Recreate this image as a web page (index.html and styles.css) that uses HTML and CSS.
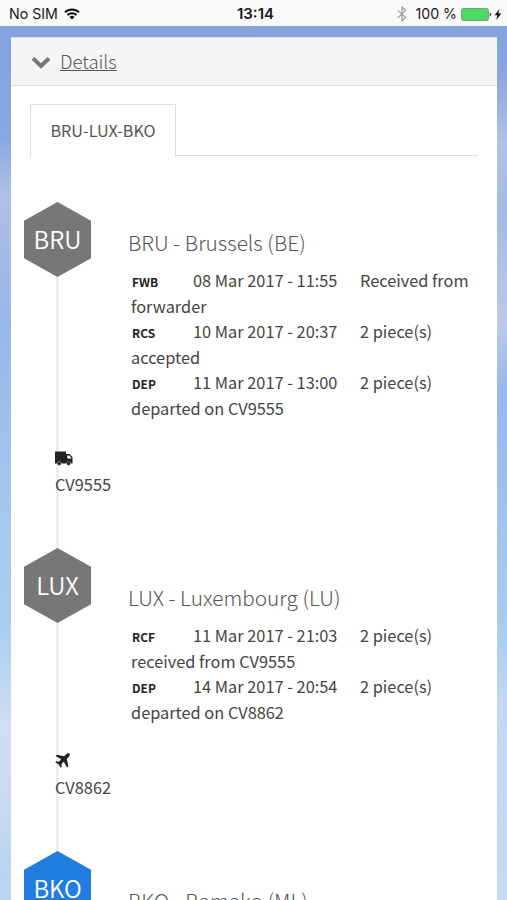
FILE: index.html
```html
<!DOCTYPE html>
<html lang="en">

<head>
    <meta charset="UTF-8">
    <meta name="viewport" content="width=device-width, initial-scale=1.0">
    <title>Shipment Details</title>
    <link rel="stylesheet" href="styles.css">
</head>

<body>

    <!-- Status bar -->
    <div class="status-bar">
        <div class="status-left">
            <span>No SIM</span>
            <svg class="wifi" viewBox="0 0 16 12">
                <path d="M1 4.4 A10 10 0 0 1 15 4.4" />
                <path d="M3.4 7 A6.6 6.6 0 0 1 12.6 7" />
                <path class="wifi-dot" d="M8 11.6 L5.4 8.9 A3.8 3.8 0 0 1 10.6 8.9 Z" />
            </svg>
        </div>
        <div class="status-time">13:14</div>
        <div class="status-right">
            <svg class="bluetooth" viewBox="0 0 10 16">
                <path d="M1 4.4 L8.6 11.4 L5 15 V1 L8.6 4.6 L1 11.6" />
            </svg>
            <span>100 %</span>
            <svg class="battery" viewBox="0 0 31 13">
                <rect x="0.5" y="0.5" width="27" height="12" rx="2" />
                <path d="M28.6 4.4 V8.6 Q30.4 8 30.4 6.5 Q30.4 5 28.6 4.4 Z" />
            </svg>
            <svg class="bolt" viewBox="0 0 8 11">
                <path d="M5.4 0 L0.6 6.2 H3.4 L2.2 11 L7.4 4.6 H4.4 Z" />
            </svg>
        </div>
    </div>

    <!-- Shipment panel -->
    <div class="page">
        <div class="panel">
            <div class="panel-header">
                <svg class="chevron" viewBox="0 0 20 13">
                    <path d="M2 2.4 L10 10 L18 2.4" />
                </svg>
                <a class="panel-title">Details</a>
            </div>

            <div class="tabs">
                <div class="tab">BRU-LUX-BKO</div>
                <div class="tab-rest"></div>
            </div>

            <div class="timeline">
                <div class="stop first">
                    <div class="track">
                        <div class="hexagon">BRU</div>
                        <div class="transit">
                            <svg class="truck" viewBox="0 0 18 15">
                                <path d="M0 0.5 H11 V3 H14.6 L17.5 6.2 V12.4 H16 A2.4 2.4 0 0 0 11.3 12.4 H6.6 A2.4 2.4 0 0 0 1.9 12.4 H0 Z" />
                                <path class="truck-window" d="M12.3 4.4 H14.2 L16.2 6.8 V7.4 H12.3 Z" />
                                <circle cx="4.2" cy="12.6" r="1.8" />
                                <circle cx="13.6" cy="12.6" r="1.8" />
                            </svg>
                            <span>CV9555</span>
                        </div>
                    </div>
                    <div class="info">
                        <h3>BRU - Brussels (BE)</h3>
                        <p><b>FWB</b><span class="date">08 Mar 2017 - 11:55</span>Received from forwarder</p>
                        <p><b>RCS</b><span class="date">10 Mar 2017 - 20:37</span>2 piece(s) accepted</p>
                        <p><b>DEP</b><span class="date">11 Mar 2017 - 13:00</span>2 piece(s) departed on CV9555</p>
                    </div>
                </div>

                <div class="stop">
                    <div class="track">
                        <div class="hexagon">LUX</div>
                        <div class="transit">
                            <svg class="plane" viewBox="0 0 16 16">
                                <path d="M15.6 0.4 C14.4 -0.1 12.8 0.4 11.6 1.6 L9.8 3.4 L2 1.8 L0.6 3.2 L6.6 6.6 L4.2 9.2 L1.5 8.8 L0.3 10 L3.9 12.1 L6 15.7 L7.2 14.5 L6.8 11.8 L9.4 9.4 L12.8 15.4 L14.2 14 L12.6 6.2 L14.4 4.4 C15.6 3.2 16.1 1.6 15.6 0.4 Z" />
                            </svg>
                            <span>CV8862</span>
                        </div>
                    </div>
                    <div class="info">
                        <h3>LUX - Luxembourg (LU)</h3>
                        <p><b>RCF</b><span class="date">11 Mar 2017 - 21:03</span>2 piece(s) received from CV9555</p>
                        <p><b>DEP</b><span class="date">14 Mar 2017 - 20:54</span>2 piece(s) departed on CV8862</p>
                    </div>
                </div>

                <div class="stop last">
                    <div class="track">
                        <div class="hexagon active">BKO</div>
                    </div>
                    <div class="info">
                        <h3>BKO - Bamako (ML)</h3>
                    </div>
                </div>
            </div>
        </div>
    </div>

</body>

</html>
```

FILE: styles.css
```css
* {
    margin: 0;
    padding: 0;
    box-sizing: border-box;
}

body {
    font-family: "Noto Sans CJK SC", sans-serif;
    font-size: 16.35px;
    color: #444;
    height: 900px;
    overflow: hidden;
    display: flex;
    flex-direction: column;
}

/* Status bar */
.status-bar {
    height: 26px;
    flex-shrink: 0;
    background-color: #f9f9f9;
    color: #1a1a1a;
    font-family: Inter, sans-serif;
    font-size: 14.2px;
    line-height: 26px;
    padding: 1px 5px 0 9px;
    display: grid;
    grid-template-columns: 1fr auto 1fr;
    align-items: center;
}

.status-left,
.status-right {
    display: flex;
    align-items: center;
}

.status-left {
    gap: 6px;
}

.status-right {
    justify-content: flex-end;
}

.status-time {
    font-size: 15px;
    font-weight: 600;
}

.wifi {
    width: 16px;
    height: 12px;
    fill: none;
    stroke: #111;
    stroke-width: 2;
}

.wifi .wifi-dot {
    fill: #111;
    stroke: none;
}

.bluetooth {
    width: 10px;
    height: 16px;
    margin-right: 8px;
    fill: none;
    stroke: #999;
    stroke-width: 1.2;
}

.battery {
    width: 31px;
    height: 13px;
    margin: 0 2px 0 4px;
    fill: #555;
}

.battery rect {
    fill: #4cd964;
    stroke: #7d9c82;
}

.bolt {
    width: 8px;
    height: 11px;
    fill: #111;
}

/* Page background */
.page {
    flex: 1;
    min-height: 0;
    padding: 11px 10px 0 11px;
    background:
        linear-gradient(#84a3dd 0, #88a4dc 40px, #b0c2e5 118px, #a5bbe3 185px, #bccae7 297px, #98b8ea 364px, #a1c5ec 500px, #abcfee 616px, #c2d8f0 672px, #c6daf2 874px) right / 50% 100% no-repeat,
        linear-gradient(#84a3dd 0, #87a8e1 110px, #b0c1e5 170px, #a3b9e8 240px, #99b7ea 300px, #a2c3ec 420px, #a9cff0 600px, #cfdef2 700px, #cbdcf1 760px, #b8d4ef 850px, #bcd6f1 874px);
}

.panel {
    height: 100%;
    background-color: #fff;
    overflow: hidden;
}

.panel-header {
    height: 49px;
    background-color: #f5f5f5;
    border-top: 1px solid #d4e2f3;
    border-bottom: 1px solid #ddd;
    display: flex;
    align-items: center;
    padding: 0 0 2px 20px;
    gap: 9px;
}

.chevron {
    width: 20px;
    height: 13px;
    margin-top: 3px;
    fill: none;
    stroke: #777;
    stroke-width: 4;
}

.panel-title {
    font-size: 18.6px;
    font-weight: 300;
    color: #555;
    text-decoration: underline;
}

/* Tabs */
.tabs {
    display: flex;
    margin: 18px 19px 0;
    height: 53px;
}

.tab {
    width: 146px;
    border: 1px solid #ddd;
    border-bottom: none;
    font-size: 16.2px;
    line-height: 50px;
    text-align: center;
    color: #555;
}

.tab-rest {
    flex: 1;
    height: 52px;
    border-bottom: 1px solid #ddd;
}

/* Timeline */
.timeline {
    padding: 45px 20px 0 13px;
}

.stop {
    display: flex;
    height: 303px;
}

.stop.first {
    height: 346px;
}

.track {
    width: 104px;
    flex-shrink: 0;
    display: flex;
    flex-direction: column;
    justify-content: space-between;
    background: linear-gradient(#eee, #eee) 32px 0 / 3px 100% no-repeat;
}

.hexagon {
    width: 67px;
    height: 75px;
    background-color: #777;
    clip-path: polygon(50% 0, 100% 25%, 100% 75%, 50% 100%, 0 75%, 0 25%);
    color: #fff;
    font-size: 24px;
    font-weight: 350;
    line-height: 74px;
    text-align: center;
}

.hexagon.active {
    background-color: #227de0;
}

.transit {
    display: flex;
    flex-direction: column;
    padding: 0 0 51px 31px;
    line-height: 26px;
}

.truck {
    width: 18px;
    height: 15px;
    margin-bottom: 5px;
    fill: #222;
}

.truck-window {
    fill: #fff;
}

.plane {
    width: 15px;
    height: 15px;
    margin-bottom: 6px;
    fill: #222;
}

/* Stop details */
.info {
    padding-top: 34px;
    flex: 1;
}

.first .info {
    padding-top: 25px;
}

.info h3 {
    font-size: 20.8px;
    font-weight: 300;
    line-height: 30px;
    color: #555;
    margin-bottom: 11px;
}

.info p {
    line-height: 25.6px;
    padding-left: 3px;
}

.info b {
    display: inline-block;
    width: 62px;
    padding-left: 1px;
    font-size: 12px;
    line-height: 1;
    color: #222;
}

.info .date {
    display: inline-block;
    width: 167px;
}
```
